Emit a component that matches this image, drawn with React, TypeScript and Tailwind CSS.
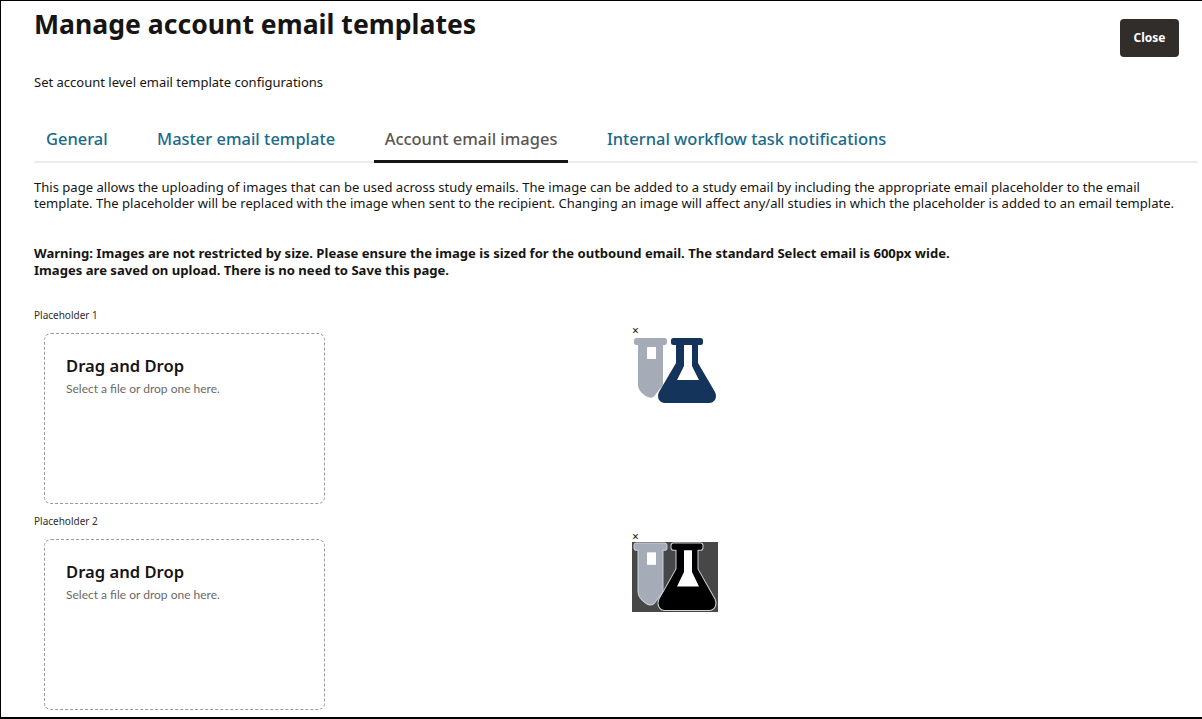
const font = "font-['Noto_Sans','Open_Sans',sans-serif]"

const tabs = ['General', 'Master email template', 'Account email images', 'Internal workflow task notifications']
const ACTIVE_TAB = 'Account email images'

// ─── Icon ─────────────────────────────────────────────────────────────────────

function LabIcon({ inverted = false }: { inverted?: boolean }) {
  const outline = inverted ? '#c9d0da' : 'none'
  const flask = inverted ? '#000000' : '#14345c'
  return (
    <svg
      width="86"
      height="70"
      viewBox={inverted ? '0 1 86 67.5' : '0 0 86 70'}
      preserveAspectRatio="none"
      className="block"
    >
      <path
        d="M4.5 2h28a2.5 2.5 0 0 1 2.5 3v1.5a2.5 2.5 0 0 1-2.5 2.5H31v40l-9 11.5c-1.5 1.5-5 1.5-7.500 0C9 57 6 53 6 49V9H4.500A2.500 2.500 0 0 1 2 6.500V4.500A2.500 2.500 0 0 1 4.500 2Z"
        fill="#a5acb7"
        stroke={outline}
        strokeWidth="1"
      />
      <rect x="15" y="11" width="9" height="12" fill="#ffffff" />
      <path
        d="M41.500 2h27a2.500 2.500 0 0 1 2.500 2.500v2A2.500 2.500 0 0 1 68.500 9H66v18l17 29c2.500 5 0 11-6 11H33c-6 0-8.500-6-6-11l17-29V9h-2.500A2.500 2.500 0 0 1 39 6.500v-2A2.500 2.500 0 0 1 41.500 2Z"
        fill={flask}
        stroke={outline}
        strokeWidth="1"
      />
      <path d="M52 9h8v21l7 14H45l7-14Z" fill="#ffffff" />
    </svg>
  )
}

// ─── Upload row ───────────────────────────────────────────────────────────────

function PlaceholderRow({ label, inverted }: { label: string; inverted?: boolean }) {
  return (
    <div className="flex h-[206px]">
      <div className="w-[598px] shrink-0">
        <div className="h-[25px] text-[10px] leading-[14px] text-[#312d2a]">{label}</div>
        <div className="ml-[10px] h-[171px] w-[281px] rounded-[7px] border border-dashed border-[#9a9a9a] px-[21px] pt-[20px]">
          <div className="text-[16.6px] font-semibold leading-[24px] text-[#161513]">Drag and Drop</div>
          <div className="mt-[2px] font-['Lato',sans-serif] text-[12px] leading-[18px] text-[#6b6966]">Select a file or drop one here.</div>
        </div>
      </div>
      <div className="pt-[17px]">
        <div className="h-[11px] text-[12px] leading-[11px] text-[#161513]">×</div>
        <div className={inverted ? 'h-[70px] w-[86px] bg-[#474747]' : 'h-[70px] w-[86px]'}>
          <LabIcon inverted={inverted} />
        </div>
      </div>
    </div>
  )
}

// ─── Page ─────────────────────────────────────────────────────────────────────

export default function App() {
  return (
    <div className={`${font} h-[719px] w-[1202px] overflow-hidden border-l border-t border-b-2 border-black bg-white pl-[33px] pr-[4px]`}>
      <div className="flex h-[118px] items-start justify-between">
        <div>
          <h1 className="mt-[4px] text-[26.6px] font-bold leading-[38px] text-[#161513]">Manage account email templates</h1>
          <p className="mt-[29px] text-[13px] leading-[20px] text-[#161513]">Set account level email template configurations</p>
        </div>
        <button className="mr-[19px] mt-[18px] h-[38px] w-[59px] rounded-[4px] bg-[#312d2a] text-[12px] font-bold text-white">
          Close
        </button>
      </div>

      {/* Tabs */}
      <div className="flex h-[44px] border-b-2 border-[#ececec] pl-[1px]">
        {tabs.map(tab => (
          <div
            key={tab}
            className={
              tab === ACTIVE_TAB
                ? 'mb-[-2px] mr-[27.500px] border-b-[3px] border-[#161513] px-[11px] text-[16.45px] font-medium leading-[40px] text-[#5b5652]'
                : 'mr-[27.500px] px-[11px] text-[16.45px] font-medium leading-[40px] text-[#1a6a8a]'
            }
          >
            {tab}
          </div>
        ))}
      </div>

      <p className="mt-[16px] whitespace-nowrap text-[13.05px] leading-[16px] text-[#161513]">
        This page allows the uploading of images that can be used across study emails. The image can be added to a study email by including the appropriate email placeholder to the email
        <br />
        template. The placeholder will be replaced with the image when sent to the recipient. Changing an image will affect any/all studies in which the placeholder is added to an email template.
      </p>

      <p className="mt-[34px] whitespace-nowrap text-[13.08px] font-bold leading-[17px] text-[#161513]">
        Warning: Images are not restricted by size. Please ensure the image is sized for the outbound email. The standard Select email is 600px wide.
        <br />
        Images are saved on upload. There is no need to Save this page.
      </p>

      <div className="mt-[29px]">
        <PlaceholderRow label="Placeholder 1" />
        <PlaceholderRow label="Placeholder 2" inverted />
      </div>
    </div>
  )
}
